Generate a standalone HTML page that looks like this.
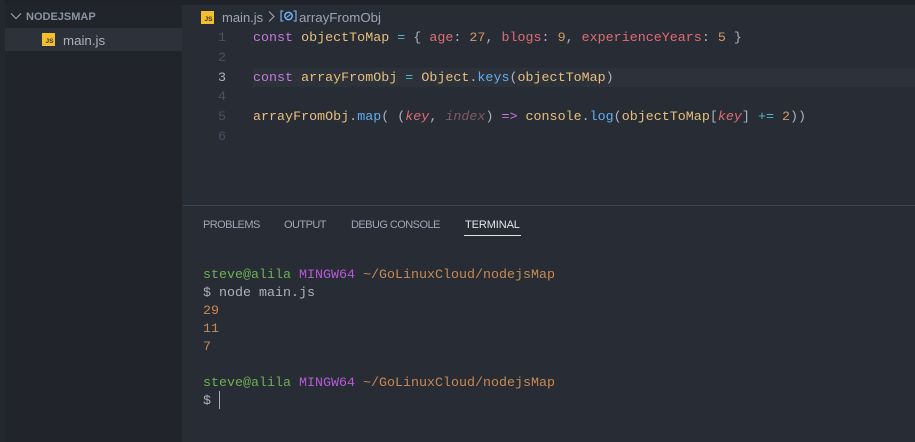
<!DOCTYPE html>
<html>
<head>
<meta charset="utf-8">
<style>
html,body{margin:0;padding:0;width:915px;height:442px;overflow:hidden;background:#282c34}
body{position:relative;font-family:"Liberation Sans",sans-serif}
div,span.a{position:absolute}
.mono{font-family:"Liberation Mono",monospace;font-size:13.33px;white-space:pre;line-height:20px}
.ln{left:205px;width:21px;text-align:right;color:#495162}
.code{left:253px;letter-spacing:.015px}
.js{width:13px;height:13px;background:#f3bf2d;color:#3a3420;font:bold 6.5px/17px "Liberation Sans",sans-serif;text-align:right;padding:0;box-sizing:border-box;padding-right:1.5px}
.tab{top:218px;font-size:11px;line-height:14px;color:#9da5b4;white-space:pre;letter-spacing:-.55px}
.t{left:203px;line-height:18px}
.k{color:#c678dd}.v{color:#e5c07b}.p{color:#abb2bf}.r{color:#e06c75}.n{color:#d19a66}.f{color:#61afef}.c{color:#56b6c2}
.i{font-style:italic}
.g{color:#6cb056}.m{color:#b65bd6}.o{color:#c88a55}
</style>
</head>
<body>
<div style="left:0;top:0;width:915px;height:5px;background:#1f2329"></div>
<div style="left:0;top:0;width:5px;height:442px;background:#23272e"></div>
<div style="left:5px;top:5px;width:177px;height:437px;background:#21252b"></div>
<div style="left:5px;top:28px;width:177px;height:23px;background:#2c313a"></div>

<svg style="position:absolute;left:10px;top:12px" width="12" height="9" viewBox="0 0 12 9"><path d="M1 1.5L6 6.5L11 1.5" fill="none" stroke="#9da5b4" stroke-width="1.1"/></svg>
<div style="left:26px;top:10px;font-size:11px;font-weight:bold;line-height:14px;color:#8b93a1">NODEJSMAP</div>
<div class="js" style="left:42px;top:33px">JS</div>
<div style="left:63px;top:33px;font-size:13.3px;line-height:16px;color:#abb2bf">main.js</div>

<div class="js" style="left:201px;top:11px">JS</div>
<div style="left:222px;top:9px;font-size:13px;line-height:17px;color:#9da5b4">main.js</div>
<svg style="position:absolute;left:267px;top:10px" width="9" height="13" viewBox="0 0 9 13"><path d="M2 1.5L7 6.5L2 11.5" fill="none" stroke="#9da5b4" stroke-width="1.1"/></svg>
<svg style="position:absolute;left:280px;top:10px" width="17" height="12" viewBox="0 0 17 12"><path d="M3.5 1H1V11H3.5M13.5 1H16V11H13.5" fill="none" stroke="#75beff" stroke-width="1.1"/><circle cx="8.5" cy="6" r="3.7" fill="none" stroke="#75beff" stroke-width="1.3"/><path d="M6.5 7.5L10.5 4.5" stroke="#75beff" stroke-width="1"/></svg>
<div style="left:299px;top:9px;font-size:13.3px;line-height:17px;color:#9da5b4">arrayFromObj</div>

<div style="left:253px;top:68px;width:662px;height:19px;background:#2c313a"></div>

<div class="mono ln" style="top:29px">1</div>
<div class="mono ln" style="top:49px">2</div>
<div class="mono ln" style="top:69px;color:#abb2bf">3</div>
<div class="mono ln" style="top:88px">4</div>
<div class="mono ln" style="top:108px">5</div>
<div class="mono ln" style="top:128px">6</div>

<div class="mono code" style="top:29px"><span class="k">const</span> <span class="v">objectToMap</span> <span class="c">=</span> <span class="p">{</span> <span class="r">age</span><span class="p">:</span> <span class="n">27</span><span class="p">,</span> <span class="r">blogs</span><span class="p">:</span> <span class="n">9</span><span class="p">,</span> <span class="r">experienceYears</span><span class="p">:</span> <span class="n">5</span> <span class="p">}</span></div>
<div class="mono code" style="top:69px"><span class="k">const</span> <span class="v">arrayFromObj</span> <span class="c">=</span> <span class="v">Object</span><span class="p">.</span><span class="f">keys</span><span class="p">(</span><span class="v">objectToMap</span><span class="p">)</span></div>
<div class="mono code" style="top:108px"><span class="v">arrayFromObj</span><span class="p">.</span><span class="f">map</span><span class="p">(</span> <span class="p">(</span><span class="r i">key</span><span class="p">,</span> <span class="i" style="color:#7f5a63">index</span><span class="p">)</span> <span class="k">=&gt;</span> <span class="v">console</span><span class="p">.</span><span class="f">log</span><span class="p">(</span><span class="v">objectToMap</span><span class="p">[</span><span class="r i">key</span><span class="p">]</span> <span class="c">+=</span> <span class="n">2</span><span class="p">))</span></div>

<div style="left:183px;top:205px;width:732px;height:1px;background:#3e4452"></div>
<div class="tab" style="left:203px">PROBLEMS</div>
<div class="tab" style="left:284px">OUTPUT</div>
<div class="tab" style="left:351px">DEBUG CONSOLE</div>
<div class="tab" style="left:465px;color:#e3e6ea;letter-spacing:-.1px">TERMINAL</div>
<div style="left:464px;top:235px;width:57px;height:1px;background:#dfe2e7"></div>

<div class="mono t" style="top:267px"><span class="g">steve@alila</span> <span class="m">MINGW64</span> <span class="o">~/GoLinuxCloud/nodejsMap</span></div>
<div class="mono t p" style="top:285px">$ node main.js</div>
<div class="mono t o" style="top:303px">29</div>
<div class="mono t o" style="top:321px">11</div>
<div class="mono t o" style="top:339px">7</div>
<div class="mono t" style="top:375px"><span class="g">steve@alila</span> <span class="m">MINGW64</span> <span class="o">~/GoLinuxCloud/nodejsMap</span></div>
<div class="mono t p" style="top:393px">$</div>
<div style="left:219px;top:391px;width:1px;height:18px;background:#abb2bf"></div>
</body>
</html>
